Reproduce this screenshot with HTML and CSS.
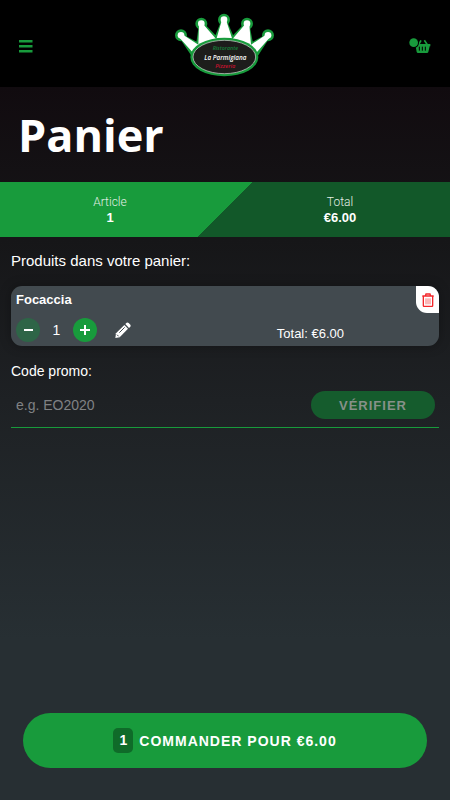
FILE: index.html
```html
<!DOCTYPE html>
<html lang="fr">
<head>
    <meta charset="UTF-8">
    <meta name="viewport" content="width=device-width, initial-scale=1.0">
    <title>Panier - La Parmigiana</title>
    <link rel="stylesheet" href="styles.css">
</head>
<body>

    <!-- Header -->
    <header class="header">
        <button type="button" class="icon-btn" aria-label="Menu">
            <svg width="14" height="14" viewBox="0 0 28 28" fill="#189b3c">
                <rect y="2" width="27" height="5"/>
                <rect y="12" width="27" height="5"/>
                <rect y="22" width="27" height="5"/>
            </svg>
        </button>
        <a href="#" class="logo" aria-label="La Parmigiana">
            <svg width="120" height="80" viewBox="0 0 360 240">
                <g stroke="#189b3c" stroke-width="14" stroke-linejoin="round" fill="#189b3c">
                    <path d="M84 150 L48 96 L100 124 L109 60 L154 106 L177 48 L202 106 L246 60 L258 124 L309 96 L274 150 Z"/>
                    <circle cx="48" cy="94" r="11"/>
                    <circle cx="109" cy="59" r="11"/>
                    <circle cx="177" cy="47" r="11"/>
                    <circle cx="246" cy="59" r="11"/>
                    <circle cx="309" cy="94" r="11"/>
                </g>
                <g fill="#fff">
                    <path d="M84 146 L42 100 L54 92 L100 122 L102 62 L116 62 L154 106 L170 50 L184 50 L202 106 L239 62 L253 62 L258 122 L303 92 L315 100 L274 146 Z"/>
                    <circle cx="48" cy="94" r="10"/>
                    <circle cx="109" cy="59" r="10"/>
                    <circle cx="177" cy="47" r="10"/>
                    <circle cx="246" cy="59" r="10"/>
                    <circle cx="309" cy="94" r="10"/>
                </g>
                <ellipse cx="178" cy="159" rx="102" ry="58" fill="#189b3c"/>
                <ellipse cx="178" cy="159" rx="94" ry="50" fill="#1d1d1b" stroke="#d8ddd8" stroke-width="2"/>
                <g class="logo-text" text-anchor="middle">
                    <text x="181" y="139" font-size="16" fill="#16803a">Ristorante</text>
                    <text x="181" y="168" font-size="19" fill="#fff">La Parmigiana</text>
                    <text x="181" y="193" font-size="17" fill="#c4122f">Pizzeria</text>
                </g>
            </svg>
        </a>
        <button type="button" class="icon-btn" aria-label="Panier">
            <svg width="22" height="16" viewBox="0 0 66 48">
                <path d="M29 20 L36 7 M46 7 L55 20" stroke="#189b3c" stroke-width="5"/>
                <path d="M17 18 H64 V25 H62 L58 42 Q57 45 54 45 H27 Q24 45 23 42 L20 25 H17 Z" fill="#189b3c"/>
                <path d="M31 26 V38 M40 26 V38 M49 26 V38" stroke="#000" stroke-width="3"/>
                <circle cx="14" cy="14" r="16" fill="#000"/>
                <circle cx="14" cy="14" r="13" fill="#189b3c"/>
            </svg>
        </button>
    </header>

    <h1 class="title">Panier</h1>

    <!-- Summary -->
    <section class="summary">
        <div class="summary-item">
            <span>Article</span>
            <strong>1</strong>
        </div>
        <div class="summary-item">
            <span>Total</span>
            <strong>€6.00</strong>
        </div>
    </section>

    <!-- Cart -->
    <main class="cart">
        <h2>Produits dans votre panier:</h2>
        <article class="product">
            <h3>Focaccia</h3>
            <div class="product-row">
                <div class="quantity">
                    <button type="button" class="qty-btn" disabled aria-label="Moins">
                        <svg width="10" height="10" viewBox="0 0 10 10"><path d="M1 5 H10" stroke="#fff" stroke-width="2"/></svg>
                    </button>
                    <span>1</span>
                    <button type="button" class="qty-btn" aria-label="Plus">
                        <svg width="10" height="10" viewBox="0 0 10 10"><path d="M0 5 H10 M5 0 V10" stroke="#fff" stroke-width="2"/></svg>
                    </button>
                    <button type="button" class="edit-btn" aria-label="Modifier">
                        <svg width="16" height="16" viewBox="0 0 48 48">
                            <path d="M31 6 L35 2 Q38 0 41 3 L46 8 Q48 11 46 14 L42 18 Z" fill="#fff"/>
                            <path d="M28 9 L39 20 L14 46 L1 48 L3 34 Z" fill="#fff"/>
                            <path d="M13 32 L29 16 M6 38 L11 43" stroke="#424a4f" stroke-width="3"/>
                        </svg>
                    </button>
                </div>
                <p class="product-total">Total: €6.00</p>
            </div>
            <button type="button" class="delete-btn" aria-label="Supprimer">
                <svg width="14" height="16" viewBox="0 0 42 48" fill="none" stroke="#f3272b">
                    <path d="M4 12 H38 M13 12 L15 6 H27 L29 12" stroke-width="4"/>
                    <path d="M7 12 V41 Q7 43 9 43 H33 Q35 43 35 41 V12" stroke-width="4"/>
                    <path d="M15 19 V37 M21 19 V37 M27 19 V37" stroke-width="2"/>
                </svg>
            </button>
        </article>

        <form class="promo" action="#">
            <label for="promo">Code promo:</label>
            <div class="promo-row">
                <input type="text" id="promo" name="promo" placeholder="e.g. EO2020">
                <button type="submit" class="verify-btn" disabled>VÉRIFIER</button>
            </div>
        </form>
    </main>

    <footer class="footer">
        <button type="button" class="order-btn"><span class="count">1</span>COMMANDER POUR €6.00</button>
    </footer>

</body>
</html>
```
FILE: styles.css
```css
* {
    margin: 0;
    padding: 0;
    box-sizing: border-box;
}

body {
    display: flex;
    flex-direction: column;
    min-height: 100vh;
    font-family: "Liberation Sans", Arial, sans-serif;
    font-size: 15px;
    color: #fff;
    background: linear-gradient(#110b0f 87px, #161618 240px, #1e2124 400px, #272f33 640px);
}

button {
    border: none;
    font-family: inherit;
    color: #fff;
    cursor: pointer;
}

svg {
    display: block;
}

/* Header */
.header {
    display: flex;
    justify-content: space-between;
    align-items: center;
    height: 87px;
    padding: 0 19px;
    background-color: #000;
}

.icon-btn {
    display: flex;
    width: 22px;
    padding: 5px 0 0;
    background: none;
}

.logo-text {
    font-family: "Open Sans", sans-serif;
    font-style: italic;
    font-weight: 600;
}

.title {
    padding: 17px 18px 16px;
    font-family: "Open Sans", sans-serif;
    font-size: 45px;
    line-height: 62px;
}

/* Summary */
.summary {
    display: grid;
    grid-template-columns: 1fr 1fr;
    gap: 10px;
    height: 55px;
    background: linear-gradient(135deg, #189b3c 50%, #125829 50%);
}

.summary-item {
    display: flex;
    flex-direction: column;
    align-items: center;
    padding-top: 12px;
    font-size: 13px;
    line-height: 16px;
}

.summary-item span {
    font-family: Roboto, sans-serif;
    font-size: 12px;
    font-weight: 300;
    color: #e2eee5;
}

/* Cart */
.cart {
    flex: 1;
    padding: 15px 11px;
}

.cart h2,
.promo label {
    display: block;
    font-size: 15px;
    font-weight: normal;
    line-height: 18px;
}

.promo label {
    font-size: 14px;
}

.product {
    position: relative;
    height: 60px;
    margin: 16px 0;
    padding: 5px;
    border-radius: 11px;
    background-color: #424a4f;
    box-shadow: 0 0 12px rgba(0, 0, 0, 0.3);
}

.product h3 {
    font-size: 13px;
    line-height: 18px;
}

.product-row {
    display: grid;
    grid-template-columns: 3fr 2fr;
    padding-top: 8px;
}

.quantity {
    display: flex;
    align-items: center;
}

.quantity span {
    width: 33px;
    font-size: 14px;
    text-align: center;
}

.qty-btn {
    display: flex;
    justify-content: center;
    align-items: center;
    width: 24px;
    height: 24px;
    border-radius: 50%;
    background-color: #189b3c;
}

.qty-btn:disabled {
    background-color: #2e6547;
}

.edit-btn {
    margin-left: 18px;
    background: none;
}

.product-total {
    padding: 9px 10px 0;
    font-size: 13px;
    line-height: 16px;
}

.delete-btn {
    position: absolute;
    top: 0;
    right: 0;
    display: flex;
    justify-content: center;
    align-items: center;
    width: 23px;
    height: 27px;
    border-radius: 0 11px 0 11px;
    background-color: #fff;
}

/* Promo code */
.promo-row {
    display: flex;
    align-items: center;
    margin-top: 8px;
    padding: 3px 4px 8px 5px;
    border-bottom: 1px solid #189b3c;
}

.promo-row input {
    flex: 1;
    min-width: 0;
    border: none;
    background: none;
    font-family: inherit;
    font-size: 14px;
    color: #fff;
}

.promo-row input::placeholder {
    color: #808284;
}

.verify-btn {
    width: 124px;
    height: 28px;
    border-radius: 14px;
    background-color: #155c2d;
    font-size: 13px;
    font-weight: bold;
    letter-spacing: 1px;
    color: #879189;
}

/* Footer */
.footer {
    padding: 0 23px 32px;
}

.order-btn {
    display: flex;
    justify-content: center;
    align-items: center;
    gap: 6px;
    width: 100%;
    height: 55px;
    border-radius: 28px;
    background-color: #189b3c;
    font-size: 14px;
    font-weight: bold;
    letter-spacing: 1px;
}

.count {
    width: 20px;
    border-radius: 5px;
    background-color: #0f6b29;
    line-height: 25px;
    letter-spacing: 0;
}
```
